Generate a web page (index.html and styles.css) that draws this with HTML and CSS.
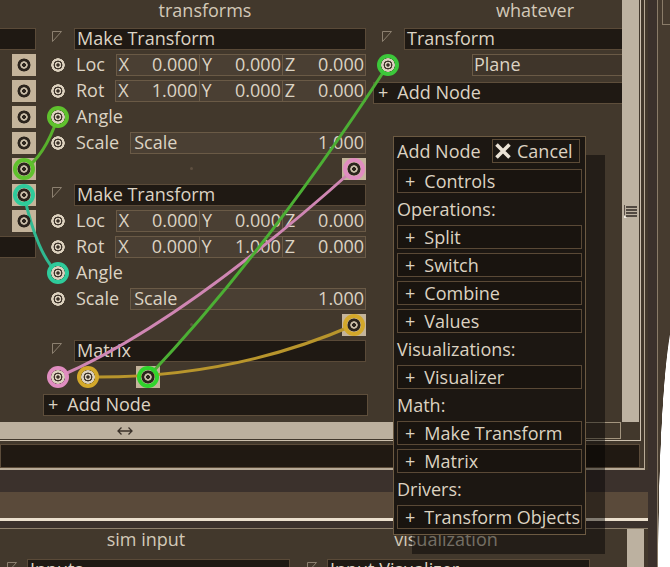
FILE: index.html
```html
<!DOCTYPE html>
<html lang="en">
<head>
  <meta charset="UTF-8" />
  <title>Node editor</title>
  <link rel="stylesheet" href="styles.css">
</head>
<body>
  <div class="app">
    <div class="left">
      <div class="frame">
        <div class="editor">
          <div class="editor-top">
            <div class="canvas">
              <!-- column scrolled mostly out of view -->
              <div class="col col-first">
                <div class="col-title"></div>
                <div class="row">
                  <svg class="tri" width="10" height="11"><polygon points="0.5,0.5 9.5,0.5 0.5,10.5" /></svg>
                  <div class="hfield">Inputs</div>
                </div>
                <div class="row out"><span class="port"><span class="sock dark"></span></span></div>
                <div class="row out"><span class="port"><span class="sock dark"></span></span></div>
                <div class="row out"><span class="port"><span class="sock dark"></span></span></div>
                <div class="row out"><span class="port"><span class="sock dark"></span></span></div>
                <div class="row out"><span class="port"><span class="sock dark ring-lime"></span></span></div>
                <div class="row out"><span class="port"><span class="sock dark ring-teal"></span></span></div>
                <div class="row out"><span class="port"><span class="sock dark"></span></span></div>
                <div class="row">
                  <svg class="tri" width="10" height="11"><polygon points="0.5,0.5 9.5,0.5 0.5,10.5" /></svg>
                  <div class="hfield">Values</div>
                </div>
              </div>

              <div class="col">
                <div class="col-title">transforms</div>

                <div class="row">
                  <svg class="tri" width="10" height="11"><polygon points="0.5,0.5 9.5,0.5 0.5,10.5" /></svg>
                  <div class="hfield">Make Transform</div>
                </div>
                <div class="row in">
                  <span class="sock"></span><span class="label">Loc</span>
                  <div class="vec">
                    <span class="sub"><span>X</span><span>0.000</span></span>
                    <span class="sub"><span>Y</span><span>0.000</span></span>
                    <span class="sub"><span>Z</span><span>0.000</span></span>
                  </div>
                </div>
                <div class="row in">
                  <span class="sock"></span><span class="label">Rot</span>
                  <div class="vec">
                    <span class="sub"><span>X</span><span>1.000</span></span>
                    <span class="sub"><span>Y</span><span>0.000</span></span>
                    <span class="sub"><span>Z</span><span>0.000</span></span>
                  </div>
                </div>
                <div class="row in">
                  <span class="sock ring-lime"></span><span class="label">Angle</span>
                </div>
                <div class="row in">
                  <span class="sock"></span><span class="label">Scale</span>
                  <div class="scalar"><span>Scale</span><span>1.000</span></div>
                </div>
                <div class="row out">
                  <span class="dot"></span>
                  <span class="port"><span class="sock dark ring-pink"></span></span>
                </div>

                <div class="row">
                  <svg class="tri" width="10" height="11"><polygon points="0.5,0.5 9.5,0.5 0.5,10.5" /></svg>
                  <div class="hfield">Make Transform</div>
                </div>
                <div class="row in">
                  <span class="sock"></span><span class="label">Loc</span>
                  <div class="vec">
                    <span class="sub"><span>X</span><span>0.000</span></span>
                    <span class="sub"><span>Y</span><span>0.000</span></span>
                    <span class="sub"><span>Z</span><span>0.000</span></span>
                  </div>
                </div>
                <div class="row in">
                  <span class="sock"></span><span class="label">Rot</span>
                  <div class="vec">
                    <span class="sub"><span>X</span><span>0.000</span></span>
                    <span class="sub"><span>Y</span><span>1.000</span></span>
                    <span class="sub"><span>Z</span><span>0.000</span></span>
                  </div>
                </div>
                <div class="row in">
                  <span class="sock ring-teal"></span><span class="label">Angle</span>
                </div>
                <div class="row in">
                  <span class="sock"></span><span class="label">Scale</span>
                  <div class="scalar"><span>Scale</span><span>1.000</span></div>
                </div>
                <div class="row out">
                  <span class="dot"></span>
                  <span class="port"><span class="sock dark ring-yellow"></span></span>
                </div>

                <div class="row">
                  <svg class="tri" width="10" height="11"><polygon points="0.5,0.5 9.5,0.5 0.5,10.5" /></svg>
                  <div class="hfield">Matrix</div>
                </div>
                <div class="row in matrix">
                  <span class="sock ring-pink"></span>
                  <span class="sock ring-yellow"></span>
                  <span class="port"><span class="sock dark ring-bright"></span></span>
                </div>
                <div class="add-node"><span class="plus">+</span>Add Node</div>
              </div>

              <div class="col">
                <div class="col-title">whatever</div>
                <div class="row">
                  <svg class="tri" width="10" height="11"><polygon points="0.5,0.5 9.5,0.5 0.5,10.5" /></svg>
                  <div class="hfield">Transform</div>
                </div>
                <div class="row in">
                  <span class="sock ring-green"></span>
                  <div class="enum">Plane</div>
                </div>
                <div class="add-node"><span class="plus">+</span>Add Node</div>
              </div>

              <svg class="wires" width="622" height="422">
                <path d="M24 169 C40 160 50 140 58 117" stroke="#58b02c" />
                <path d="M24 195 C32 232 44 262 58 273" stroke="#2fb991" />
                <path d="M58 377 Q180 325 354 169" stroke="#cf86b3" />
                <path d="M88 377 Q230 379 354 325" stroke="#b8952c" stroke-width="4" />
                <path d="M148 377 Q268 250 388 65" stroke="#4caf34" />
              </svg>
            </div>
            <div class="vscroll">
              <svg width="15" height="14">
                <path d="M1.5 0v13" stroke="#5b5047" />
                <path d="M3 2h11M3 5h11M3 8h11M3 11h11" stroke="#2f2923" stroke-width="1.5" />
                <path d="M1 10l3 3H1z" fill="#f2ede4" />
              </svg>
            </div>
          </div>
          <div class="editor-bottom">
            <div class="hscroll">
              <svg width="16" height="10"><path d="M1 5h14M4.5 1.5L1 5l3.5 3.5M11.5 1.5L15 5l-3.5 3.5" /></svg>
            </div>
            <div class="corner"></div>
          </div>
        </div>
        <div class="textline"></div>
      </div>
      <div class="band-gray"></div>
      <div class="band-brown"></div>
      <div class="bright"></div>
      <div class="band-dark"></div>
      <div class="thin"></div>
      <div class="bottom">
        <div class="bcol">
          <div class="bcol-title">sim input</div>
          <div class="brow">
            <svg class="tri" width="10" height="11"><polygon points="0.5,0.5 9.5,0.5 0.5,10.5" /></svg>
            <div class="bfield">Inputs</div>
          </div>
        </div>
        <div class="bcol">
          <div class="bcol-title">visualization</div>
          <div class="brow">
            <svg class="tri" width="10" height="11"><polygon points="0.5,0.5 9.5,0.5 0.5,10.5" /></svg>
            <div class="bfield">Input Visualizer</div>
          </div>
        </div>
        <div class="bscroll"></div>
      </div>
    </div>
    <div class="strip"></div>
    <div class="edge"></div>
    <div class="far"><div class="far-box"></div></div>

    <div class="popup">
      <div class="popup-head">
        <span>Add Node</span>
        <div class="cancel">
          <svg width="18" height="18"><path d="M2.5 2.5l13 13M15.5 2.5l-13 13" /></svg>
          Cancel
        </div>
      </div>
      <div class="popup-list">
        <div class="item"><span class="plus">+</span>Controls</div>
        <div class="group">Operations:</div>
        <div class="item"><span class="plus">+</span>Split</div>
        <div class="item"><span class="plus">+</span>Switch</div>
        <div class="item"><span class="plus">+</span>Combine</div>
        <div class="item"><span class="plus">+</span>Values</div>
        <div class="group">Visualizations:</div>
        <div class="item"><span class="plus">+</span>Visualizer</div>
        <div class="group">Math:</div>
        <div class="item"><span class="plus">+</span>Make Transform</div>
        <div class="item"><span class="plus">+</span>Matrix</div>
        <div class="group">Drivers:</div>
        <div class="item"><span class="plus">+</span>Transform Objects</div>
      </div>
    </div>
  </div>
</body>
</html>
```

FILE: styles.css
```css
* {
  box-sizing: border-box;
  margin: 0;
  padding: 0;
}

body {
  width: 670px;
  height: 567px;
  overflow: hidden;
  background: #42382c;
  font-family: "Open Sans", "Noto Sans", sans-serif;
  font-size: 18px;
  color: #dcd3c3;
}

.app {
  position: relative;
  display: flex;
  width: 670px;
  height: 567px;
  overflow: hidden;
}

.left {
  width: 648px;
  flex: none;
  display: flex;
  flex-direction: column;
}

.left > * {
  flex: none;
}

/* editor frame */
.frame {
  width: 645px;
  height: 470px;
  border-right: 1px solid #b8ab97;
  border-bottom: 2px solid #b8ab97;
}

.editor {
  width: 641px;
  height: 441px;
  display: flex;
  flex-direction: column;
  border-right: 1px solid #cdc1ae;
  border-bottom: 1px solid #cdc1ae;
}

.editor-top {
  display: flex;
  height: 422px;
}

.canvas {
  position: relative;
  width: 622px;
  height: 422px;
  overflow: hidden;
  display: flex;
  gap: 4px;
}

.vscroll {
  width: 17px;
  background: #bdb2a1;
  padding-top: 200px;
  padding-left: 1px;
}

.editor-bottom {
  display: flex;
  height: 17px;
}

.hscroll {
  width: 585px;
  background: #bcb09e;
  padding-left: 117px;
  display: flex;
  align-items: center;
}

.hscroll path {
  stroke: #3a3129;
  stroke-width: 1.3;
  fill: none;
}

.corner {
  width: 36px;
  border: 1px solid #a3957f;
}

.textline {
  width: 640px;
  height: 24px;
  margin-top: 3px;
  background: #201912;
  border: 1px solid #5c4c3a;
}

.band-gray { height: 22px; background: #3b312c; }
.band-brown { height: 26px; background: #5a4a3a; }
.bright { height: 3px; background: #ece0ce; }
.band-dark { height: 7px; background: #3b312c; }
.thin { height: 1px; background: #8e806d; }

/* node columns */
.col {
  width: 326px;
  flex: none;
  display: flex;
  flex-direction: column;
  gap: 4px;
}

.col-first {
  margin-left: -288px;
}

.col-title {
  height: 24px;
  line-height: 20px;
  text-align: center;
  color: #d3c9b8;
}

.row {
  height: 22px;
  display: flex;
  align-items: flex-start;
  flex: none;
}

.tri {
  margin: 3px 12px 0 10px;
  flex: none;
}

.tri polygon {
  fill: none;
  stroke: #8c8070;
  stroke-width: 1;
}

.hfield {
  flex: 1;
  height: 22px;
  margin-right: 2px;
  padding-left: 2px;
  line-height: 18px;
  background: #1f1913;
  border: 1px solid #5a4a38;
  white-space: nowrap;
  overflow: hidden;
}

.row.in {
  padding-left: 9px;
}

.row.out {
  justify-content: flex-end;
  padding-right: 2px;
}

.label {
  margin-left: 11px;
  margin-right: 11px;
  line-height: 20px;
}

.vec {
  flex: 1;
  display: flex;
  height: 22px;
  margin-right: 2px;
  background: #4a3f33;
  border: 1px solid #6a5a46;
}

.sub {
  flex: 1;
  display: flex;
  justify-content: space-between;
  padding: 0 1px 0 2px;
  line-height: 18px;
  border-left: 1px solid #6a5a46;
}

.sub:first-child {
  border-left: none;
}

.scalar {
  flex: 1;
  display: flex;
  justify-content: space-between;
  height: 22px;
  margin-right: 2px;
  padding: 0 1px 0 3px;
  line-height: 18px;
  background: #4a3f33;
  border: 1px solid #6a5a46;
}

.enum {
  flex: 1;
  height: 22px;
  margin-left: 77px;
  padding-left: 1px;
  line-height: 18px;
  border: 1px solid #6a5a46;
  background: #3f352a;
}

.add-node {
  height: 22px;
  margin: 2px 0 0 1px;
  padding-left: 4px;
  line-height: 18px;
  background: #1f1913;
  border: 1px solid #5e4e3b;
  display: flex;
}

.plus {
  margin-right: 9px;
}

/* sockets */
.sock {
  position: relative;
  z-index: 2;
  width: 14px;
  height: 14px;
  margin-top: 4px;
  flex: none;
  border-radius: 50%;
  background: radial-gradient(circle, #3a3027 0 1.4px, #d8cdba 1.9px 2.9px, #3d332a 3.4px 4.2px, #dcd1be 4.7px 6.6px, transparent 7px);
}

.sock.dark {
  background: radial-gradient(circle, #2b241d 0 1.6px, #c9bda8 2.2px 3.4px, #2b241d 4px 6.2px, transparent 6.8px);
}

.port {
  width: 24px;
  height: 22px;
  padding: 0 5px;
  background: #c4b49b;
  display: flex;
}

.row.matrix .sock + .sock {
  margin-left: 16px;
}

.row.matrix .port {
  margin-left: 41px;
}

.ring-lime { box-shadow: 0 0 0 4px #5fc12d; }
.ring-teal { box-shadow: 0 0 0 4px #2ecb9b; }
.ring-pink { box-shadow: 0 0 0 4px #e08dc0; }
.ring-yellow { box-shadow: 0 0 0 4px #d3a82a; }
.ring-bright { box-shadow: 0 0 0 4px #2fd42c; }
.ring-green { box-shadow: 0 0 0 4px #3cc83a; }

.dot {
  width: 3px;
  height: 3px;
  margin: 9px auto 0 148px;
  border-radius: 50%;
  background: #5e4f40;
}

.wires {
  position: absolute;
  left: 0;
  top: 0;
  z-index: 1;
  pointer-events: none;
}

.wires path {
  fill: none;
  stroke-width: 3;
}

/* lower panel */
.bottom {
  flex: 1 1 auto;
  min-height: 0;
  overflow: hidden;
  display: flex;
  gap: 4px;
}

.bcol {
  width: 296px;
  flex: none;
  display: flex;
  flex-direction: column;
}

.bcol:first-child {
  margin-left: -2px;
}

.bcol-title {
  height: 30px;
  flex: none;
  line-height: 20px;
  text-align: center;
  color: #d3c9b8;
}

.brow {
  display: flex;
  align-items: flex-start;
  height: 22px;
  flex: none;
}

.brow .tri {
  margin: 3px 10px 0 9px;
}

.bfield {
  flex: 1;
  height: 22px;
  margin-right: 4px;
  padding-left: 2px;
  line-height: 18px;
  background: #1f1913;
  border: 1px solid #5a4a38;
  white-space: nowrap;
}

.bscroll {
  width: 17px;
  margin-left: 29px;
  background: #bcb1a0;
}

/* right edge */
.strip {
  width: 9px;
  flex: none;
  background: #3b312c;
}

.edge {
  width: 1px;
  flex: none;
  background: #8a7c69;
}

.far {
  width: 12px;
  flex: none;
  background:
    radial-gradient(20px 260px at 20px 570px, #ffffff 98%, rgba(255, 255, 255, 0) 100%),
    #463b2f;
}

.far-box {
  height: 25px;
  margin-left: 4px;
  border-left: 1px solid #8a7c69;
  border-bottom: 1px solid #8a7c69;
}

/* add node popup */
.popup {
  position: absolute;
  left: 393px;
  top: 136px;
  z-index: 5;
  width: 193px;
  height: 399px;
  padding: 2px 3px 5px;
  background: #1c1712;
  border: 1px solid #6c5a42;
  box-shadow: 19px 19px 0 rgba(0, 0, 0, 0.45);
  color: #dcd2c1;
}

.popup-head {
  display: flex;
  justify-content: space-between;
  height: 24px;
  line-height: 24px;
  padding-right: 2px;
  margin-bottom: 6px;
}

.cancel {
  width: 88px;
  height: 24px;
  display: flex;
  align-items: center;
  gap: 5px;
  padding-left: 1px;
  line-height: 22px;
  border: 1px solid #5c4b37;
}

.cancel path {
  stroke: #ebe3d6;
  stroke-width: 3.6;
}

.popup-list {
  display: flex;
  flex-direction: column;
  gap: 4px;
}

.item {
  height: 24px;
  display: flex;
  padding-left: 7px;
  line-height: 22px;
  background: #19140f;
  border: 1px solid #5a4936;
}

.group {
  height: 24px;
  line-height: 24px;
}
```
